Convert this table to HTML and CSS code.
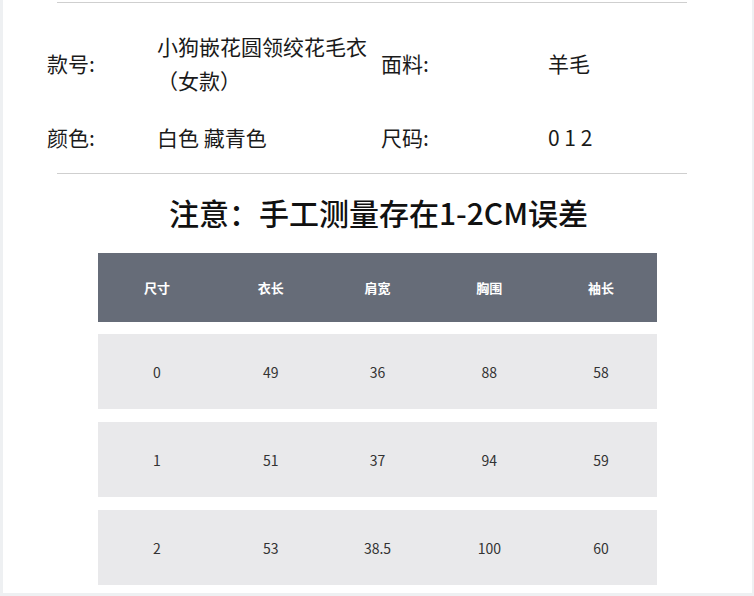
FILE: index.html
```html
<!DOCTYPE html>
<html lang="zh">
<head>
<meta charset="utf-8">
<link rel="stylesheet" href="styles.css">
</head>
<body>
<div class="page">
  <div class="rule"></div>
  <div class="info">
    <div class="label">款号:</div>
    <div class="value wrap">小狗嵌花圆领绞花毛衣（女款）</div>
    <div class="label">面料:</div>
    <div class="value">羊毛</div>
    <div class="label">颜色:</div>
    <div class="value">白色 藏青色</div>
    <div class="label">尺码:</div>
    <div class="value">0 1 2</div>
  </div>
  <div class="rule"></div>
  <h1 class="title">注意：手工测量存在1-2CM误差</h1>
  <div class="table">
    <div class="row head"><span>尺寸</span><span>衣长</span><span>肩宽</span><span>胸围</span><span>袖长</span></div>
    <div class="row"><span>0</span><span>49</span><span>36</span><span>88</span><span>58</span></div>
    <div class="row"><span>1</span><span>51</span><span>37</span><span>94</span><span>59</span></div>
    <div class="row"><span>2</span><span>53</span><span>38.5</span><span>100</span><span>60</span></div>
  </div>
</div>
</body>
</html>
```

FILE: styles.css
```css
html, body {
  margin: 0;
  padding: 0;
  background: #ffffff;
}
.page {
  box-sizing: border-box;
  width: 754px;
  height: 596px;
  overflow: hidden;
  border-left: 3px solid #eef0f2;
  border-right: 2px solid #eef0f2;
  border-bottom: 3px solid #eef0f2;
  padding-top: 2px;
  font-family: "Noto Sans CJK SC", "Noto Sans", sans-serif;
  color: #1a1a1a;
}
.rule {
  height: 1px;
  background: #cfcfcf;
  margin-left: 54px;
  width: 630px;
}
.info {
  display: grid;
  grid-template-columns: 110px 224px 167px 1fr;
  row-gap: 23px;
  align-items: center;
  padding: 26px 0 19px 44px;
  font-size: 21px;
  line-height: 34px;
}
.wrap {
  width: 224px;
}
.title {
  margin: 18px 0 21px;
  text-align: center;
  font-size: 30px;
  line-height: 40px;
  font-weight: 500;
  color: #111;
  padding-left: 2px;
}
.table {
  margin-left: 95px;
  width: 559px;
  display: flex;
  flex-direction: column;
  gap: 13px;
}
.table .head {
  background: #666c78;
  color: #fff;
  font-weight: 700;
  font-size: 13px;
  height: 69px;
  margin-bottom: -1px;
}
.row {
  display: grid;
  grid-template-columns: repeat(5, 1fr);
  align-items: center;
  height: 75px;
  background: #e9e9eb;
  color: #333;
  font-size: 14px;
}
.row span {
  text-align: center;
}
.row span:first-child {
  padding-left: 6px;
}
.row span:nth-child(2) {
  padding-left: 10px;
}
```
